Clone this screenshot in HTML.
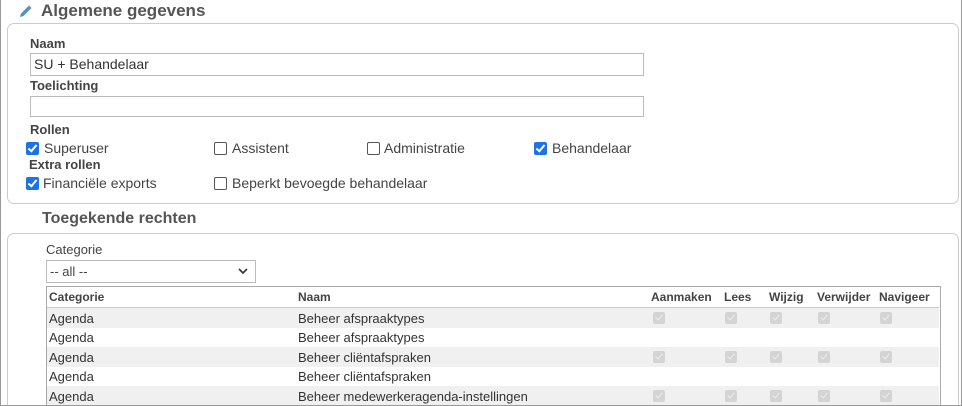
<!DOCTYPE html>
<html style="overflow:hidden;width:962px;height:406px"><head><style>
body{margin:0;width:962px;height:406px;overflow:hidden;font-family:"Liberation Sans",Arial,sans-serif;color:#333;background:#fff;position:relative}
.frame{position:absolute;left:0;top:0;width:960px;height:405px;border:1px solid #999;border-top:none;z-index:5;pointer-events:none}
.a{position:absolute;white-space:nowrap}
.h{font-weight:bold;font-size:17px;color:#555}
.lb{font-weight:bold;font-size:13px;color:#444}
.t{font-size:13px;color:#333}
.c{font-size:14px;color:#444}
.box{position:absolute;border:1px solid #ccc;border-radius:7px}
.inp{position:absolute;border:1px solid #bbb;height:20px;background:#fff;font-size:13px;line-height:20px;padding-left:3px;box-sizing:border-box}
.cb{position:absolute;width:11px;height:11px;border:1px solid #555;border-radius:2px;background:#fff}
.cb.on{background:#1a73e8;border-color:#1a73e8}
.cb.on::after{content:"";position:absolute;left:3px;top:0px;width:3px;height:7px;border:solid #fff;border-width:0 2px 2px 0;transform:rotate(40deg)}
.g{position:absolute;width:12px;height:12px;background:#d4d4d4;border-radius:2px}
.g::after{content:"";position:absolute;left:4px;top:1px;width:3px;height:6px;border:solid #eee;border-width:0 1.5px 1.5px 0;transform:rotate(40deg)}
.row{position:absolute;left:47px;width:892px;height:20px}
</style></head><body>
<div class="frame"></div>
<svg class="a" style="left:18px;top:3px" width="16" height="16" viewBox="0 0 16 16"><path d="M2 14 L3 10.5 L11 2.5 L13.5 5 L5.5 13 Z" fill="#5a8fc0"/></svg>
<div class="a h" style="left:41px;top:1px">Algemene gegevens</div>
<div class="box" style="left:7px;top:23px;width:950px;height:179px"></div>
<div class="a lb" style="left:30px;top:36px">Naam</div>
<div class="inp" style="left:30px;top:53px;width:614px;height:23px;line-height:21px;font-size:14px">SU + Behandelaar</div>
<div class="a lb" style="left:30px;top:78px">Toelichting</div>
<div class="inp" style="left:30px;top:96px;width:614px;height:21px"></div>
<div class="a lb" style="left:30px;top:122px">Rollen</div>
<div class="cb on" style="left:26px;top:142px"></div><div class="a c" style="left:44px;top:140px">Superuser</div>
<div class="cb" style="left:214px;top:142px"></div><div class="a c" style="left:232px;top:140px">Assistent</div>
<div class="cb" style="left:367px;top:142px"></div><div class="a c" style="left:384px;top:140px">Administratie</div>
<div class="cb on" style="left:534px;top:142px"></div><div class="a c" style="left:552px;top:140px">Behandelaar</div>
<div class="a lb" style="left:29px;top:157px">Extra rollen</div>
<div class="cb on" style="left:26px;top:177px"></div><div class="a c" style="left:43px;top:175px">Financiële exports</div>
<div class="cb" style="left:214px;top:177px"></div><div class="a c" style="left:232px;top:175px">Beperkt bevoegde behandelaar</div>
<div class="a h" style="left:42px;top:210px;font-size:16px">Toegekende rechten</div>
<div class="box" style="left:7px;top:233px;width:950px;height:172px;border-bottom:none;border-radius:7px 7px 0 0"></div>
<div class="a t" style="left:46px;top:242px;color:#444">Categorie</div>
<div class="inp" style="left:46px;top:260px;width:210px;height:23px;line-height:21px;color:#444">-- all --
<svg style="position:absolute;right:7px;top:7px" width="10" height="7" viewBox="0 0 10 7"><path d="M1 1 L5 5 L9 1" stroke="#333" stroke-width="1.6" fill="none"/></svg></div>
<div class="a" style="left:46px;top:286px;width:893px;height:119px;border:1px solid #aaa;border-bottom:none"></div>
<div class="row" style="top:287px;border-bottom:1px solid #ccc;height:20px"></div>
<div class="a lb" style="left:49px;top:290px;font-size:12px">Categorie</div>
<div class="a lb" style="left:298px;top:290px;font-size:12px">Naam</div>
<div class="a lb" style="left:651px;top:290px;font-size:12px">Aanmaken</div>
<div class="a lb" style="left:724px;top:290px;font-size:12px">Lees</div>
<div class="a lb" style="left:769px;top:290px;font-size:12px">Wijzig</div>
<div class="a lb" style="left:817px;top:290px;font-size:12px">Verwijder</div>
<div class="a lb" style="left:879px;top:290px;font-size:12px">Navigeer</div>

<div class="row" style="top:308px;background:#f0f0f0"></div>
<div class="row" style="top:347px;background:#f0f0f0"></div>
<div class="row" style="top:386px;background:#f0f0f0;height:19px"></div>

<div class="a t" style="left:49px;top:311px">Agenda</div><div class="a t" style="left:298px;top:311px">Beheer afspraaktypes</div>
<div class="a t" style="left:49px;top:330px">Agenda</div><div class="a t" style="left:298px;top:330px">Beheer afspraaktypes</div>
<div class="a t" style="left:49px;top:350px">Agenda</div><div class="a t" style="left:298px;top:350px">Beheer cliëntafspraken</div>
<div class="a t" style="left:49px;top:369px">Agenda</div><div class="a t" style="left:298px;top:369px">Beheer cliëntafspraken</div>
<div class="a t" style="left:49px;top:389px">Agenda</div><div class="a t" style="left:298px;top:389px">Beheer medewerkeragenda-instellingen</div>

<div class="g" style="left:653px;top:312px"></div><div class="g" style="left:725px;top:312px"></div><div class="g" style="left:770px;top:312px"></div><div class="g" style="left:818px;top:312px"></div><div class="g" style="left:880px;top:312px"></div>
<div class="g" style="left:653px;top:351px"></div><div class="g" style="left:725px;top:351px"></div><div class="g" style="left:770px;top:351px"></div><div class="g" style="left:818px;top:351px"></div><div class="g" style="left:880px;top:351px"></div>
<div class="g" style="left:653px;top:390px"></div><div class="g" style="left:725px;top:390px"></div><div class="g" style="left:770px;top:390px"></div><div class="g" style="left:818px;top:390px"></div><div class="g" style="left:880px;top:390px"></div>
</body></html>
